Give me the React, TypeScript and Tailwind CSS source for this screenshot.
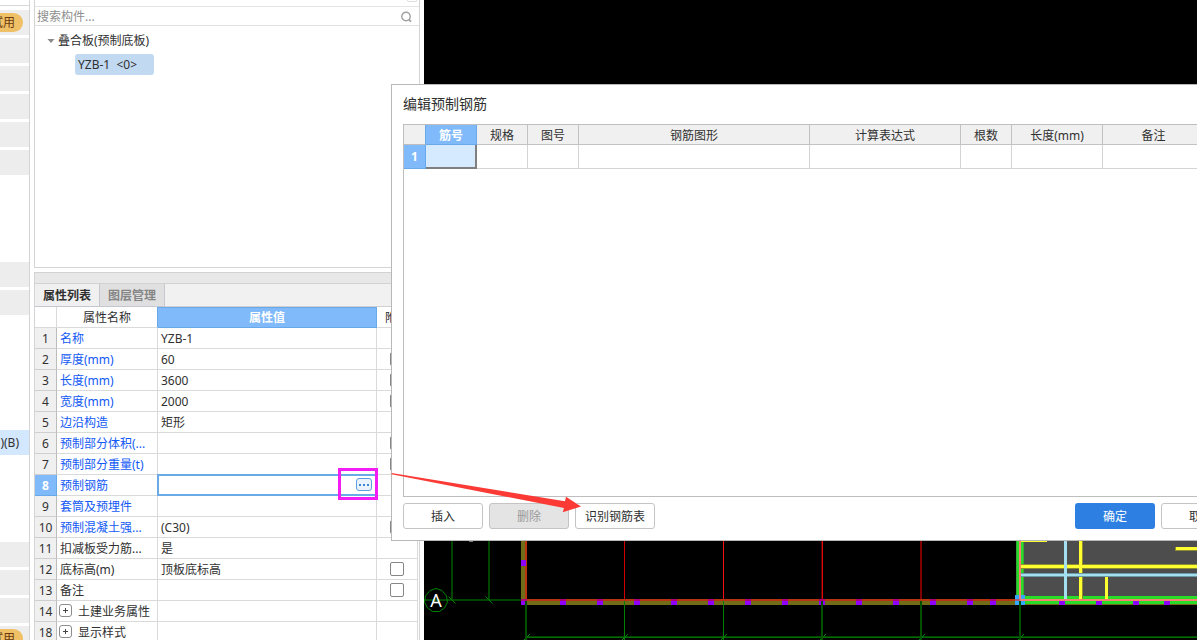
import React from 'react';

interface PropertyRow {
  no: number;
  name: string;
  value?: string;
  link?: boolean;
  check?: boolean;
  group?: boolean;
  active?: boolean;
}

const PROPERTIES: PropertyRow[] = [
  { no: 1, name: '名称', value: 'YZB-1', link: true },
  { no: 2, name: '厚度(mm)', value: '60', link: true, check: true },
  { no: 3, name: '长度(mm)', value: '3600', link: true, check: true },
  { no: 4, name: '宽度(mm)', value: '2000', link: true, check: true },
  { no: 5, name: '边沿构造', value: '矩形', link: true },
  { no: 6, name: '预制部分体积(...', link: true, check: true },
  { no: 7, name: '预制部分重量(t)', link: true, check: true },
  { no: 8, name: '预制钢筋', link: true, active: true },
  { no: 9, name: '套筒及预埋件', link: true },
  { no: 10, name: '预制混凝土强...', value: '(C30)', link: true, check: true },
  { no: 11, name: '扣减板受力筋...', value: '是' },
  { no: 12, name: '底标高(m)', value: '顶板底标高', check: true },
  { no: 13, name: '备注', check: true },
  { no: 14, name: '土建业务属性', group: true },
  { no: 18, name: '显示样式', group: true },
];

const REBAR_COLUMNS = [
  { label: '规格', width: 'w-[51px]' },
  { label: '图号', width: 'w-[51px]' },
  { label: '钢筋图形', width: 'w-[231px]' },
  { label: '计算表达式', width: 'w-[151px]' },
  { label: '根数', width: 'w-[51px]' },
  { label: '长度(mm)', width: 'w-[91px]' },
  { label: '备注', width: 'w-[102px]' },
];

const RailItem: React.FC<{ badge?: boolean }> = ({ badge }) => (
  <div className="flex h-[25px] shrink-0 items-center justify-end overflow-hidden bg-[#ededed] pr-1.5">
    {badge && (
      <span className="flex h-[19px] shrink-0 items-center rounded-full bg-[#efc066] px-2 text-[#6b3a10]">试用</span>
    )}
  </div>
);

const NavRail: React.FC = () => (
  <aside className="flex w-[30px] shrink-0 flex-col overflow-hidden border-r border-[#d4d4d4] bg-white">
    <div className="mb-1 h-1.5 shrink-0 border-b border-[#d8d8d8]" />
    <div className="flex flex-col gap-[3px]">
      <RailItem badge />
      <RailItem />
      <RailItem />
      <RailItem />
      <RailItem />
      <RailItem />
    </div>
    <div className="mt-[87px] flex flex-col gap-[3px]">
      <RailItem />
      <RailItem />
    </div>
    <div className="mt-[115px] flex h-[25px] shrink-0 items-center justify-end bg-[#d3e7ff] pr-2.5 whitespace-nowrap">
      <span className="shrink-0">)(B)</span>
    </div>
    <div className="mt-[87px] flex flex-col gap-[3px]">
      <RailItem />
      <RailItem />
      <RailItem />
      <RailItem badge />
    </div>
  </aside>
);

const ComponentTree: React.FC = () => (
  <section className="h-[268px] shrink-0 border-x border-b border-[#d4d4d4] bg-white">
    <div className="flex h-[7px] justify-end border-b border-[#e4e4e4] pr-0.5">
      <div className="h-0.5 w-2.5 rounded-b-sm border-x border-b border-[#dcdcdc]" />
    </div>
    <div className="flex h-[19px] items-center border-b border-[#e0e0e0] pt-0.5 pr-1.5">
      <input
        type="text"
        aria-label="搜索构件"
        placeholder="搜索构件..."
        className="h-4 min-w-0 flex-1 bg-transparent pl-0.5 outline-none placeholder:text-[#8e8e8e]"
      />
      <svg className="h-3 w-3" viewBox="0 0 12 12" fill="none" stroke="#a0a0a0" strokeWidth="1.4">
        <circle cx="5" cy="5.500" r="4.200" />
        <path d="M7.800 8.500 10 10.600" strokeWidth="1.800" />
      </svg>
    </div>
    <ul className="pt-1">
      <li>
        <div className="flex h-[22px] items-center gap-[3px] pl-3">
          <svg className="h-2 w-2" viewBox="0 0 8 8" fill="#8a8a8a">
            <path d="M.5 2h7L4 6z" />
          </svg>
          <span>叠合板(预制底板)</span>
        </div>
        <ul className="pt-0.5 pl-10">
          <li className="flex h-[21px] w-[79px] items-center rounded-[3px] bg-[#c1d9f1] pl-[3px] whitespace-pre">{'YZB-1  <0>'}</li>
        </ul>
      </li>
    </ul>
  </section>
);

const ValueEditor: React.FC = () => (
  <div className="absolute -top-px -left-px flex h-[22px] w-[220px] items-start border-2 border-[#6aaae6] bg-white pt-0.5 pr-[3px]">
    <input type="text" aria-label="预制钢筋" className="h-4 min-w-0 flex-1 px-0.5 outline-none" />
    <button
      type="button"
      aria-label="编辑"
      className="flex h-[13px] w-4 items-center justify-center gap-0.5 rounded-[3px] border border-[#5b9fe2] bg-[#eaf2fb]"
    >
      <i className="h-0.5 w-0.5 bg-[#3b86d8]" />
      <i className="h-0.5 w-0.5 bg-[#3b86d8]" />
      <i className="h-0.5 w-0.5 bg-[#3b86d8]" />
    </button>
  </div>
);

const PropertyPanel: React.FC = () => (
  <section className="mt-1 flex-1 overflow-hidden border-x border-[#d4d4d4] bg-white">
    <div className="h-3 border-y border-[#d2d2d2] bg-[#e8e8e8]" />
    <div className="flex h-[23px] border-b border-[#d0d0d0] bg-[#f1f1f1]">
      <button type="button" className="h-[23px] w-[65px] border-r border-b border-[#c4c8ce] bg-[#f0f0f0] pt-0.5 font-bold">
        属性列表
      </button>
      <button
        type="button"
        className="h-[23px] w-[65px] border-r border-b border-[#c4c8ce] bg-[#e0e0e0] pt-0.5 font-bold text-[#858585]"
      >
        图层管理
      </button>
    </div>
    <table className="w-[383px] table-fixed border-separate border-spacing-0">
      <thead>
        <tr className="h-[21px]">
          <th className="w-[22px] border-r border-b border-[#dadada] p-0" />
          <th className="w-[101px] border-r border-b border-r-[#68a9ea] border-b-[#dadada] p-0 pt-0.5 font-normal">属性名称</th>
          <th className="w-[219px] border-y border-r border-[#68a9ea] bg-[#80bafa] p-0 font-bold text-white">属性值</th>
          <th className="w-[41px] border-r border-b border-[#dadada] p-0 pt-0.5 font-normal">附加</th>
        </tr>
      </thead>
      <tbody>
        {PROPERTIES.map((row) => (
          <tr key={row.no} className="h-[21px]">
            <th
              scope="row"
              className={
                row.active
                  ? 'border-r border-b border-[#68a9ea] bg-[#80bafa] p-0 pt-0.5 font-bold text-white'
                  : 'border-r border-b border-r-[#bcbcbc] border-b-[#cfcfcf] bg-[#f0f0f0] p-0 pt-0.5 font-normal'
              }
            >
              {row.no}
            </th>
            <td className={`border-r border-b border-[#dadada] p-0 pt-0.5 whitespace-nowrap ${row.group ? 'pl-0.5' : 'pl-[3px]'}`}>
              {row.group ? (
                <span className="flex items-start gap-1.5">
                  <button
                    type="button"
                    aria-label="展开"
                    className="flex h-[13px] w-[13px] shrink-0 items-center justify-center rounded-[3px] border border-[#8c8c8c]"
                  >
                    <svg className="h-[5px] w-[5px]" viewBox="0 0 5 5" shapeRendering="crispEdges" fill="#444">
                      <path d="M2 0h1v5H2zM0 2h5v1H0z" />
                    </svg>
                  </button>
                  {row.name}
                </span>
              ) : (
                <span className={row.link ? 'text-[#1259f5]' : ''}>{row.name}</span>
              )}
            </td>
            <td className="relative border-r border-b border-[#dadada] p-0 pt-0.5 pl-[3px] whitespace-nowrap">
              {row.active ? <ValueEditor /> : row.value}
            </td>
            <td className="border-r border-b border-[#dadada] p-0">
              {row.check && (
                <input
                  type="checkbox"
                  aria-label={row.name}
                  className="mx-auto block h-3.5 w-3.5 appearance-none rounded-[2px] border border-[#868686] bg-white"
                />
              )}
            </td>
          </tr>
        ))}
      </tbody>
    </table>
  </section>
);

const GRID_X = [526, 624, 723, 822, 921, 1020];
const WALL_MARKS = [521, 560, 597, 634, 671, 708, 745, 782, 819, 856, 893, 930, 967, 990, 1059, 1096, 1133, 1164];

const DrawingCanvas: React.FC = () => (
  <main className="min-w-0 flex-1 bg-black">
    <svg className="h-full w-full" viewBox="424 0 773 640" preserveAspectRatio="xMinYMin slice" shapeRendering="crispEdges">
      {/* axis lines */}
      <g fill="#004600">
        <rect x="451" y="540" width="2" height="60" />
        <rect x="488" y="540" width="2" height="60" />
        <rect x="424" y="599" width="98" height="2" />
        <rect x="526" y="636" width="671" height="2" />
      </g>
      <rect x="526" y="637" width="671" height="1" fill="#006e00" />
      <g stroke="#008400" shapeRendering="auto">
        <path d="M448.500 596.500 455.500 603.500M485.500 596.500 492.500 603.500" />
        {GRID_X.map((x) => (
          <path key={x} d={`M${x - 3} 641l7 -7`} />
        ))}
        <path d="M436 588.500l6 2 4.500 5.500 1 6-3 6-5 3.500h-7l-5-3.500-3-6 1-6 4.500-5.500z" fill="none" />
      </g>
      <rect x="469" y="540" width="4" height="2" fill="#777" />
      <text x="436" y="607" textAnchor="middle" fill="#fff" fontSize="18" fontFamily="'Noto Sans', sans-serif">A</text>

      {/* span lines */}
      <rect x="624" y="540" width="1" height="60" fill="#d00000" />
      <rect x="723" y="540" width="1" height="60" fill="#f01010" />
      <rect x="821" y="540" width="1" height="60" fill="#500000" />
      <rect x="822" y="540" width="1" height="60" fill="#e00808" />
      <rect x="920" y="540" width="2" height="60" fill="#800000" />

      {/* walls */}
      <rect x="521" y="540" width="4" height="61" fill="#706c18" />
      <rect x="525" y="540" width="2" height="59" fill="#b83410" />
      <rect x="521" y="560" width="5" height="6" fill="#8f00ff" />
      <rect x="525" y="601" width="672" height="4" fill="#706c18" />
      <rect x="525" y="599" width="495" height="2" fill="#b83410" />

      {/* slab */}
      <rect x="1020" y="540" width="177" height="60" fill="#4d4d4d" />
      <rect x="1016" y="540" width="8" height="60" fill="#35a835" />
      <rect x="1017" y="540" width="6" height="60" fill="#28dc28" />
      <rect x="1020" y="596" width="177" height="8" fill="#28dc28" />
      <g fill="#8c8c30">
        <rect x="1021" y="564" width="176" height="5" />
        <rect x="1079" y="540" width="4" height="59" />
        <rect x="1175" y="547" width="22" height="4" />
      </g>
      <g fill="#ffff32">
        <rect x="1021" y="541" width="26" height="1" />
        <rect x="1021" y="565" width="176" height="3" />
        <rect x="1079" y="540" width="3" height="59" />
        <rect x="1105" y="573" width="3" height="26" />
        <rect x="1176" y="547" width="21" height="3" />
      </g>
      <rect x="1021" y="573" width="176" height="4" fill="#6c9aa4" />
      <rect x="1021" y="574" width="176" height="2" fill="#a4dff0" />
      <rect x="1064" y="540" width="3" height="59" fill="#a4dff0" />

      {WALL_MARKS.map((x) => (
        <g key={x}>
          <rect x={x} y="601" width="6" height="4" fill="#8f00ff" />
          {x < 1000 && <rect x={x} y="599" width="6" height="2" fill="#b00078" />}
        </g>
      ))}
      <rect x="1015" y="595" width="10" height="10" fill="#34a8ff" />
      <rect x="1019" y="540" width="2" height="60" fill="#f88070" />
      <rect x="1020" y="599" width="177" height="2" fill="#f88070" />
      <rect x="1015" y="599" width="5" height="2" fill="#a06080" />

      <g fill="#005000">
        <rect x="525" y="601" width="2" height="39" />
        <rect x="821" y="601" width="2" height="39" />
        <rect x="920" y="601" width="2" height="39" />
        <rect x="1019" y="601" width="2" height="39" />
      </g>
      <g fill="#008000">
        <rect x="624" y="601" width="1" height="39" />
        <rect x="723" y="601" width="1" height="39" />
      </g>
    </svg>
  </main>
);

const RebarDialog: React.FC = () => {
  const button = 'h-[26px] w-20 rounded-[3px] border border-[#c4c4c4] pt-0.5';

  return (
    <div
      role="dialog"
      aria-labelledby="rebar-title"
      className="absolute top-[84px] -right-14 left-[391px] border border-[#b8b8b8] bg-white px-[11px] pb-[11px]"
    >
      <h2 id="rebar-title" className="flex h-[39px] items-center pb-0.5 text-[14px]">编辑预制钢筋</h2>
      <div className="h-[373px] border border-[#bebebe]">
        <table className="w-[801px] table-fixed border-separate border-spacing-0">
          <thead>
            <tr className="h-5">
              <th className="w-[22px] border-r border-b border-r-[#68a9ea] border-b-[#bebebe] bg-[#f0f0f0] p-0" />
              <th className="w-[51px] border-r border-b border-[#68a9ea] bg-[#80bafa] p-0 pt-0.5 font-bold text-white">筋号</th>
              {REBAR_COLUMNS.map((col) => (
                <th key={col.label} className={`${col.width} border-r border-b border-[#c2c2c2] bg-[#f0f0f0] p-0 pt-0.5 font-normal`}>
                  {col.label}
                </th>
              ))}
            </tr>
          </thead>
          <tbody>
            <tr className="h-6">
              <th scope="row" className="border-r border-b border-[#68a9ea] bg-[#80bafa] p-0 font-bold text-white">1</th>
              <td className="border-r-2 border-b-2 border-[#7f7f7f] bg-[#d5e9ff] p-0" />
              {REBAR_COLUMNS.map((col) => (
                <td key={col.label} className="border-r border-b border-[#d4d4d4] p-0" />
              ))}
            </tr>
          </tbody>
        </table>
      </div>
      <div className="mt-1.5 flex gap-1.5">
        <button type="button" className={button}>插入</button>
        <button type="button" disabled className={`${button} bg-[#e4e4e4] text-[#9a9a9a]`}>删除</button>
        <button type="button" className={button}>识别钢筋表</button>
        <button type="button" className="ml-auto h-[26px] w-20 rounded-[3px] bg-[#2d7fe2] pt-0.5 text-white">确定</button>
        <button type="button" className={button}>取消</button>
      </div>
    </div>
  );
};

// Highlight box and arrow drawn on top of the windows
const Callout: React.FC = () => (
  <svg className="pointer-events-none absolute top-[468px] left-[338px] h-12 w-64" viewBox="338 468 256 48">
    <rect x="339.500" y="469.500" width="37" height="29" fill="none" stroke="#f41cf4" strokeWidth="3" />
    <path d="M391.500 473 565 501.300 566 496.700 581 506.500 562.700 512.300 564 508 391.500 474.300z" fill="#fb3a35" />
  </svg>
);

const App: React.FC = () => (
  <div className="relative flex h-screen overflow-hidden bg-white font-['Noto_Sans','Noto_Sans_CJK_SC',sans-serif] text-[12px] leading-4 text-[#303030]">
    <NavRail />
    <div className="mx-1 flex w-[386px] shrink-0 flex-col">
      <ComponentTree />
      <PropertyPanel />
    </div>
    <DrawingCanvas />
    <RebarDialog />
    <Callout />
  </div>
);

export default App;
